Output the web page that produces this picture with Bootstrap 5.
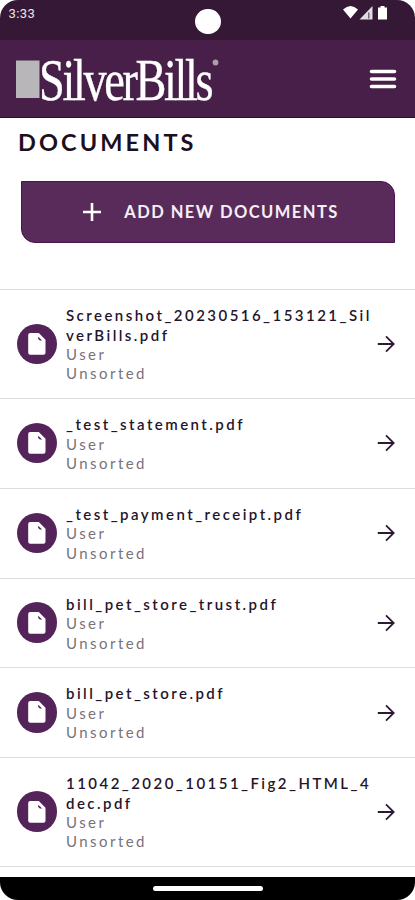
<!DOCTYPE html>
<html lang="en">
<head>
<meta charset="utf-8">
<meta name="viewport" content="width=device-width, initial-scale=1">
<title>SilverBills Documents</title>
<link href="https://cdn.jsdelivr.net/npm/bootstrap@5.3.0/dist/css/bootstrap.min.css" rel="stylesheet">
<style>
  body { font-family: Lato, sans-serif; background: #fff; color: #1c0f20; overflow: hidden; }
  .screen { height: 900px; overflow: hidden; }
  .status { height: 39.5px; background: #341836; border-radius: 18px 18px 0 0; color: #fff; }
  .clock { font: 13px/1 Roboto, sans-serif; padding: 7px 0 0 8.5px; letter-spacing: .45px; color: #e9e4ea; }
  .camera { width: 25.5px; height: 25.5px; top: 8.5px; left: 195px; background: #fff; }
  .brandbar { height: 78.5px; background: #471f49; border-bottom: 1.5px solid #350a38; padding: 0 18px 0 16px; }
  .menu-icon { margin-top: 2px; }
  .page-title { font-size: 23.5px; line-height: 28px; font-weight: 700; letter-spacing: 3.1px; padding: 10px 0 0 18px; }
  .add-btn { height: 62px; margin: 24.5px 20px 0 21px; padding: 0 0 0 5px; background: #592b5b; border: 1px solid #4a124e; border-radius: 0 14px 0 14px; color: #f6f0f6; font-size: 16.5px; font-weight: 700; letter-spacing: 1.45px; }
  .add-btn svg { margin-right: 22px; }
  .add-btn span { padding-top: 2px; }
  .docs { margin-top: 46.5px; border-top: 1px solid #dedede; }
  .doc { padding: 16.2px 20.5px 14.3px 16.5px; border-bottom: 1px solid #dedede; font-size: 15px; line-height: 19.4px; letter-spacing: 2.46px; }
  .doc-icon { width: 40.5px; height: 40.5px; background: #54235a; margin: 0 9px 2.4px 0; }
  .doc-arrow { margin-bottom: 2px; }
  .doc-name { font-weight: 600; color: #24152a; white-space: nowrap; }
  .doc-meta { color: #78727b; }
  .bottom-nav { height: 23px; background: #000; border-radius: 0 0 18px 18px; }
  .handle { width: 110px; height: 4.5px; background: #fff; }
</style>
<script src="https://cdn.jsdelivr.net/npm/bootstrap@5.3.0/dist/js/bootstrap.bundle.min.js"></script>
</head>
<body>
<svg class="d-none">
  <symbol id="file" viewBox="0 0 20 24"><path d="M3.200 1h8.600L18.500 7.700V20.800a2 2 0 0 1-2 2H3.200a2 2 0 0 1-2-2V3a2 2 0 0 1 2-2z" fill="#fff"/><path d="M11.200 4.800l3.900 3.700h-2.200l-1.700-1.500z" fill="#54235a"/></symbol>
  <symbol id="arrow" viewBox="0 0 18 18"><path d="M.8 9H16.500M9 1.300L16.700 9 9 16.700" fill="none" stroke="#2d1b33" stroke-width="1.800"/></symbol>
</svg>
<div class="screen d-flex flex-column position-relative">
  <div class="status d-flex justify-content-between align-items-start flex-shrink-0 position-relative">
    <div class="clock">3:33</div>
    <div class="camera rounded-circle position-absolute"></div>
    <svg class="me-4 mt-1" width="48" height="18" viewBox="0 0 48 18" fill="#fff">
      <path d="M0 5.500Q7.500-1.500 15 5.500L7.500 14.500z"/>
      <path d="M16.500 15.500L29.500 2V15.500z" opacity=".85"/><path d="M25 8.500h1.500v6H25z" fill="#341836" opacity=".6"/>
      <path d="M37.500 2h4v1.500H44V15.500H35V3.500h2.500z"/>
    </svg>
  </div>
  <header class="brandbar d-flex justify-content-between align-items-center flex-shrink-0">
    <svg width="206" height="76" viewBox="0 0 206 76">
      <rect x="0" y="20.500" width="23.500" height="37.500" fill="#b8b6b9"/>
      <text transform="translate(23 60) scale(.785 1)" font-family="'Liberation Serif', serif" font-size="59" letter-spacing="-3" fill="#fff" stroke="#fff" stroke-width=".4">SilverBills</text>
      <circle cx="199.500" cy="22.500" r="2.900" fill="#aaa0ad"/>
    </svg>
    <svg class="menu-icon" width="28" height="22" viewBox="0 0 28 22" stroke="#fff" stroke-width="3.600" stroke-linecap="round"><path d="M2.500 3.500h23M2.500 11h23M2.500 18.500h23"/></svg>
  </header>
  <h1 class="page-title mb-0 flex-shrink-0">DOCUMENTS</h1>
  <button class="add-btn btn d-flex align-items-center justify-content-center flex-shrink-0" type="button">
    <svg width="20" height="20" viewBox="0 0 20 20" stroke="#fff" stroke-width="2.600"><path d="M1 10h18M10 1v18"/></svg>
    <span>ADD NEW DOCUMENTS</span>
  </button>
  <main class="docs flex-grow-1 overflow-hidden">
    <div class="doc d-flex align-items-center">
      <div class="doc-icon rounded-circle d-flex align-items-center justify-content-center flex-shrink-0"><svg width="20" height="24"><use href="#file"/></svg></div>
      <div class="flex-grow-1"><div class="doc-name">Screenshot_20230516_153121_Sil<br>verBills.pdf</div><div class="doc-meta">User</div><div class="doc-meta">Unsorted</div></div>
      <svg width="18" height="18" class="doc-arrow flex-shrink-0"><use href="#arrow"/></svg>
    </div>
    <div class="doc d-flex align-items-center">
      <div class="doc-icon rounded-circle d-flex align-items-center justify-content-center flex-shrink-0"><svg width="20" height="24"><use href="#file"/></svg></div>
      <div class="flex-grow-1"><div class="doc-name">_test_statement.pdf</div><div class="doc-meta">User</div><div class="doc-meta">Unsorted</div></div>
      <svg width="18" height="18" class="doc-arrow flex-shrink-0"><use href="#arrow"/></svg>
    </div>
    <div class="doc d-flex align-items-center">
      <div class="doc-icon rounded-circle d-flex align-items-center justify-content-center flex-shrink-0"><svg width="20" height="24"><use href="#file"/></svg></div>
      <div class="flex-grow-1"><div class="doc-name">_test_payment_receipt.pdf</div><div class="doc-meta">User</div><div class="doc-meta">Unsorted</div></div>
      <svg width="18" height="18" class="doc-arrow flex-shrink-0"><use href="#arrow"/></svg>
    </div>
    <div class="doc d-flex align-items-center">
      <div class="doc-icon rounded-circle d-flex align-items-center justify-content-center flex-shrink-0"><svg width="20" height="24"><use href="#file"/></svg></div>
      <div class="flex-grow-1"><div class="doc-name">bill_pet_store_trust.pdf</div><div class="doc-meta">User</div><div class="doc-meta">Unsorted</div></div>
      <svg width="18" height="18" class="doc-arrow flex-shrink-0"><use href="#arrow"/></svg>
    </div>
    <div class="doc d-flex align-items-center">
      <div class="doc-icon rounded-circle d-flex align-items-center justify-content-center flex-shrink-0"><svg width="20" height="24"><use href="#file"/></svg></div>
      <div class="flex-grow-1"><div class="doc-name">bill_pet_store.pdf</div><div class="doc-meta">User</div><div class="doc-meta">Unsorted</div></div>
      <svg width="18" height="18" class="doc-arrow flex-shrink-0"><use href="#arrow"/></svg>
    </div>
    <div class="doc d-flex align-items-center">
      <div class="doc-icon rounded-circle d-flex align-items-center justify-content-center flex-shrink-0"><svg width="20" height="24"><use href="#file"/></svg></div>
      <div class="flex-grow-1"><div class="doc-name">11042_2020_10151_Fig2_HTML_4<br>dec.pdf</div><div class="doc-meta">User</div><div class="doc-meta">Unsorted</div></div>
      <svg width="18" height="18" class="doc-arrow flex-shrink-0"><use href="#arrow"/></svg>
    </div>
  </main>
  <div class="bottom-nav d-flex align-items-center justify-content-center flex-shrink-0"><div class="handle rounded-pill"></div></div>
</div>
</body>
</html>
